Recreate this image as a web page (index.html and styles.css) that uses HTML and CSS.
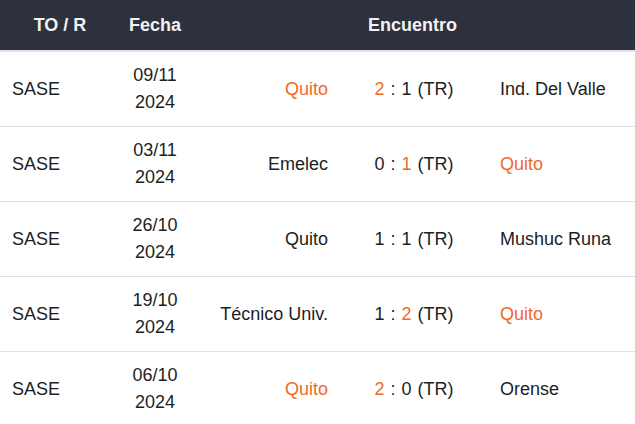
FILE: index.html
```html
<!DOCTYPE html>
<html lang="es">
<head>
<meta charset="utf-8">
<link rel="stylesheet" href="styles.css">
</head>
<body>
<table class="results">
  <colgroup>
    <col class="c-comp">
    <col class="c-date">
    <col class="c-home">
    <col class="c-score">
    <col class="c-away">
  </colgroup>
  <thead>
    <tr>
      <th>TO / R</th>
      <th>Fecha</th>
      <th colspan="3">Encuentro</th>
    </tr>
  </thead>
  <tbody>
    <tr>
      <td class="comp">SASE</td>
      <td class="date">09/11<br>2024</td>
      <td class="home hl">Quito</td>
      <td class="score"><span class="hl">2</span> : 1 (TR)</td>
      <td class="away">Ind. Del Valle</td>
    </tr>
    <tr>
      <td class="comp">SASE</td>
      <td class="date">03/11<br>2024</td>
      <td class="home">Emelec</td>
      <td class="score">0 : <span class="hl">1</span> (TR)</td>
      <td class="away hl">Quito</td>
    </tr>
    <tr>
      <td class="comp">SASE</td>
      <td class="date">26/10<br>2024</td>
      <td class="home">Quito</td>
      <td class="score">1 : 1 (TR)</td>
      <td class="away">Mushuc Runa</td>
    </tr>
    <tr>
      <td class="comp">SASE</td>
      <td class="date">19/10<br>2024</td>
      <td class="home">Técnico Univ.</td>
      <td class="score">1 : <span class="hl">2</span> (TR)</td>
      <td class="away hl">Quito</td>
    </tr>
    <tr>
      <td class="comp">SASE</td>
      <td class="date">06/10<br>2024</td>
      <td class="home hl">Quito</td>
      <td class="score"><span class="hl">2</span> : 0 (TR)</td>
      <td class="away">Orense</td>
    </tr>
  </tbody>
</table>
</body>
</html>
```
FILE: styles.css
```css
html, body {
  margin: 0;
  padding: 0;
  background: #ffffff;
}

body {
  font-family: "Liberation Sans", Arial, sans-serif;
  font-size: 18px;
  color: #1e1e1e;
}

.results {
  width: 635px;
  border-collapse: collapse;
  table-layout: fixed;
}

.c-comp { width: 120px; }
.c-date { width: 70px; }
.c-home { width: 150px; }
.c-score { width: 148px; }
.c-away { width: 147px; }

.results th {
  background: #2c313d;
  color: #f2f2f2;
  font-weight: bold;
  line-height: 27px;
  padding: 12px 0 11px;
  text-align: center;
  border-bottom: 2px solid #dee2e6;
  white-space: nowrap;
}

.results td {
  line-height: 27px;
  padding: 10px 12px;
  height: 54px;
  border-top: 1px solid #dee2e6;
  white-space: nowrap;
  vertical-align: middle;
}

.results tbody tr:first-child td {
  border-top: none;
}

.comp { text-align: left; }
.date { text-align: center; padding-left: 0 !important; padding-right: 0 !important; }
.home { text-align: right; }
.score { text-align: center; padding-left: 0 !important; padding-right: 0 !important; word-spacing: 1px; }
.away { text-align: left; }

.hl { color: #f0692a; }
```
